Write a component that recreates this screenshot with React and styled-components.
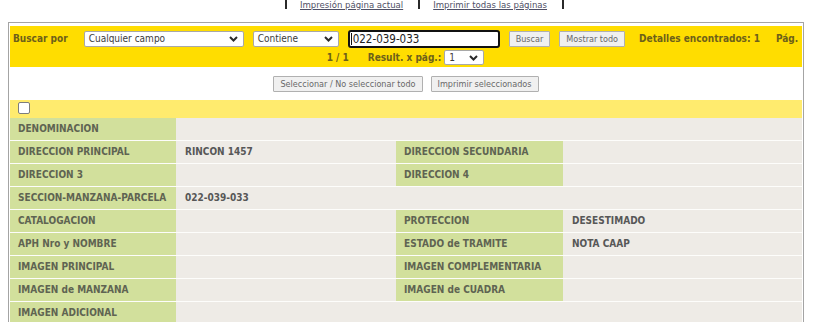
import React from 'react';
import styled, { createGlobalStyle } from 'styled-components';

const font = '"DejaVu Sans Condensed", "Liberation Sans", sans-serif';

const GlobalStyle = createGlobalStyle`
  body {
    margin: 0;
    background: #fff;
    font-family: ${font};
  }
`;

const TopLinks = styled.nav`
  display: flex;
  align-items: flex-start;
  gap: 13px;
  height: 22px;
  padding-left: 285px;
  font-size: 9.5px;
  line-height: 9px;
`;

const Sep = styled.span`
  display: block;
  width: 2px;
  height: 9px;
  background: #2a2a2a;
`;

const TopLink = styled.a`
  color: #4f5066;
  text-decoration: underline;
  margin-right: 2px;
`;

const Frame = styled.div`
  margin-left: 8px;
  width: 796px;
  box-sizing: border-box;
  border: 1px solid #a4a4a4;
  border-bottom: none;
  padding: 3px 1px 0 1px;
`;

const SearchBar = styled.div`
  background: #ffdd00;
  height: 41px;
  padding: 4px 0 0 3px;
  box-sizing: border-box;
  overflow: hidden;
  color: #6d601a;
  font-size: 10px;
  font-weight: bold;
`;

const SearchRow = styled.div`
  display: flex;
  align-items: center;
  height: 17px;
  white-space: nowrap;

  & > * {
    flex-shrink: 0;
  }
`;

const PagerRow = styled.div`
  display: flex;
  align-items: center;
  justify-content: center;
  height: 15px;
  margin-top: 3px;
  padding-right: 4px;
`;

const Label = styled.span`
  margin-right: ${p => p.$after || 0}px;
`;

const SelectBox = styled.div`
  display: flex;
  align-items: center;
  justify-content: space-between;
  box-sizing: border-box;
  width: ${p => p.$w}px;
  height: ${p => p.$h || 16}px;
  margin-right: ${p => p.$after || 0}px;
  padding: 0 5px 0 4px;
  background: #fff;
  border: 1px solid #a8a8a8;
  border-radius: 2px;
  color: #3c3c3c;
  font-weight: normal;
  font-size: 10px;
`;

const Field = styled.div`
  display: flex;
  align-items: center;
  box-sizing: border-box;
  width: 152px;
  height: 18px;
  margin-right: 9px;
  padding-left: 1px;
  background: #fff;
  border: 2px solid #111;
  border-radius: 3px;
  color: #222;
  font-weight: normal;
  font-size: 11.5px;
`;

const Caret = styled.span`
  display: block;
  width: 1px;
  height: 12px;
  margin-right: 1px;
  background: #111;
`;

const Button = styled.button`
  box-sizing: border-box;
  height: 16px;
  margin: 0 ${p => p.$after || 0}px 0 0;
  padding: 0 6px;
  background: #f0f0f0;
  border: 1px solid #b0b0b0;
  border-radius: 1px;
  color: #686868;
  font-family: ${font};
  font-size: 9px;
  line-height: 14px;
`;

const Actions = styled.div`
  display: flex;
  justify-content: center;
  gap: 8px;
  padding: 9px 0 8px 0;
`;

const CheckRow = styled.div`
  display: flex;
  align-items: flex-start;
  height: 18px;
  padding: 2px 0 0 8px;
  box-sizing: border-box;
  background: #ffeb6e;
`;

const Check = styled.input.attrs({ type: 'checkbox' })`
  appearance: none;
  width: 12px;
  height: 12px;
  margin: 0;
  background: #fff;
  border: 1px solid #7d7d7d;
  border-radius: 2px;
`;

const Details = styled.div`
  display: grid;
  grid-template-columns: 166px 220px 167px 1fr;
  grid-auto-rows: 22px;
  row-gap: 1px;
  background: #fdfdfb;
  font-size: 10px;
  font-weight: bold;
`;

const Key = styled.div`
  background: #d2e09c;
  color: #5f6452;
  padding-left: 8px;
  line-height: 22px;
  white-space: nowrap;
`;

const Value = styled.div`
  grid-column: span ${p => p.$span || 1};
  background: #eeebe6;
  color: #575757;
  padding-left: 9px;
  line-height: 22px;
  white-space: nowrap;
`;

const Chevron = () => (
  <svg width="9" height="6" viewBox="0 0 9 6">
    <path d="M1 1 L4.5 4.5 L8 1" fill="none" stroke="#2b2b2b" strokeWidth="2" />
  </svg>
);

const rows = [
  { label: 'DENOMINACION', value: '' },
  { label: 'DIRECCION PRINCIPAL', value: 'RINCON 1457', label2: 'DIRECCION SECUNDARIA', value2: '' },
  { label: 'DIRECCION 3', value: '', label2: 'DIRECCION 4', value2: '' },
  { label: 'SECCION-MANZANA-PARCELA', value: '022-039-033' },
  { label: 'CATALOGACION', value: '', label2: 'PROTECCION', value2: 'DESESTIMADO' },
  { label: 'APH Nro y NOMBRE', value: '', label2: 'ESTADO de TRAMITE', value2: 'NOTA CAAP' },
  { label: 'IMAGEN PRINCIPAL', value: '', label2: 'IMAGEN COMPLEMENTARIA', value2: '' },
  { label: 'IMAGEN de MANZANA', value: '', label2: 'IMAGEN de CUADRA', value2: '' },
  { label: 'IMAGEN ADICIONAL', value: '' },
];

const App = () => (
  <>
    <GlobalStyle />
    <TopLinks>
      <Sep />
      <TopLink>Impresión página actual</TopLink>
      <Sep />
      <TopLink>Imprimir todas las páginas</TopLink>
      <Sep />
    </TopLinks>
    <Frame>
      <SearchBar>
        <SearchRow>
          <Label $after={16}>Buscar por</Label>
          <SelectBox $w={160} $after={9}>
            Cualquier campo
            <Chevron />
          </SelectBox>
          <SelectBox $w={86} $after={9}>
            Contiene
            <Chevron />
          </SelectBox>
          <Field>
            <Caret />
            022-039-033
          </Field>
          <Button $after={9}>Buscar</Button>
          <Button $after={14}>Mostrar todo</Button>
          <Label $after={16}>Detalles encontrados: 1</Label>
          <Label>Pág.</Label>
        </SearchRow>
        <PagerRow>
          <Label $after={19}>1 / 1</Label>
          <Label $after={3}>Result. x pág.:</Label>
          <SelectBox $w={40} $h={15}>
            1
            <Chevron />
          </SelectBox>
        </PagerRow>
      </SearchBar>
      <Actions>
        <Button>Seleccionar / No seleccionar todo</Button>
        <Button>Imprimir seleccionados</Button>
      </Actions>
      <CheckRow>
        <Check />
      </CheckRow>
      <Details>
        {rows.map(r => (
          <React.Fragment key={r.label}>
            <Key>{r.label}</Key>
            <Value $span={r.label2 ? 1 : 3}>{r.value}</Value>
            {r.label2 && <Key>{r.label2}</Key>}
            {r.label2 && <Value>{r.value2}</Value>}
          </React.Fragment>
        ))}
      </Details>
    </Frame>
  </>
);

export default App;
